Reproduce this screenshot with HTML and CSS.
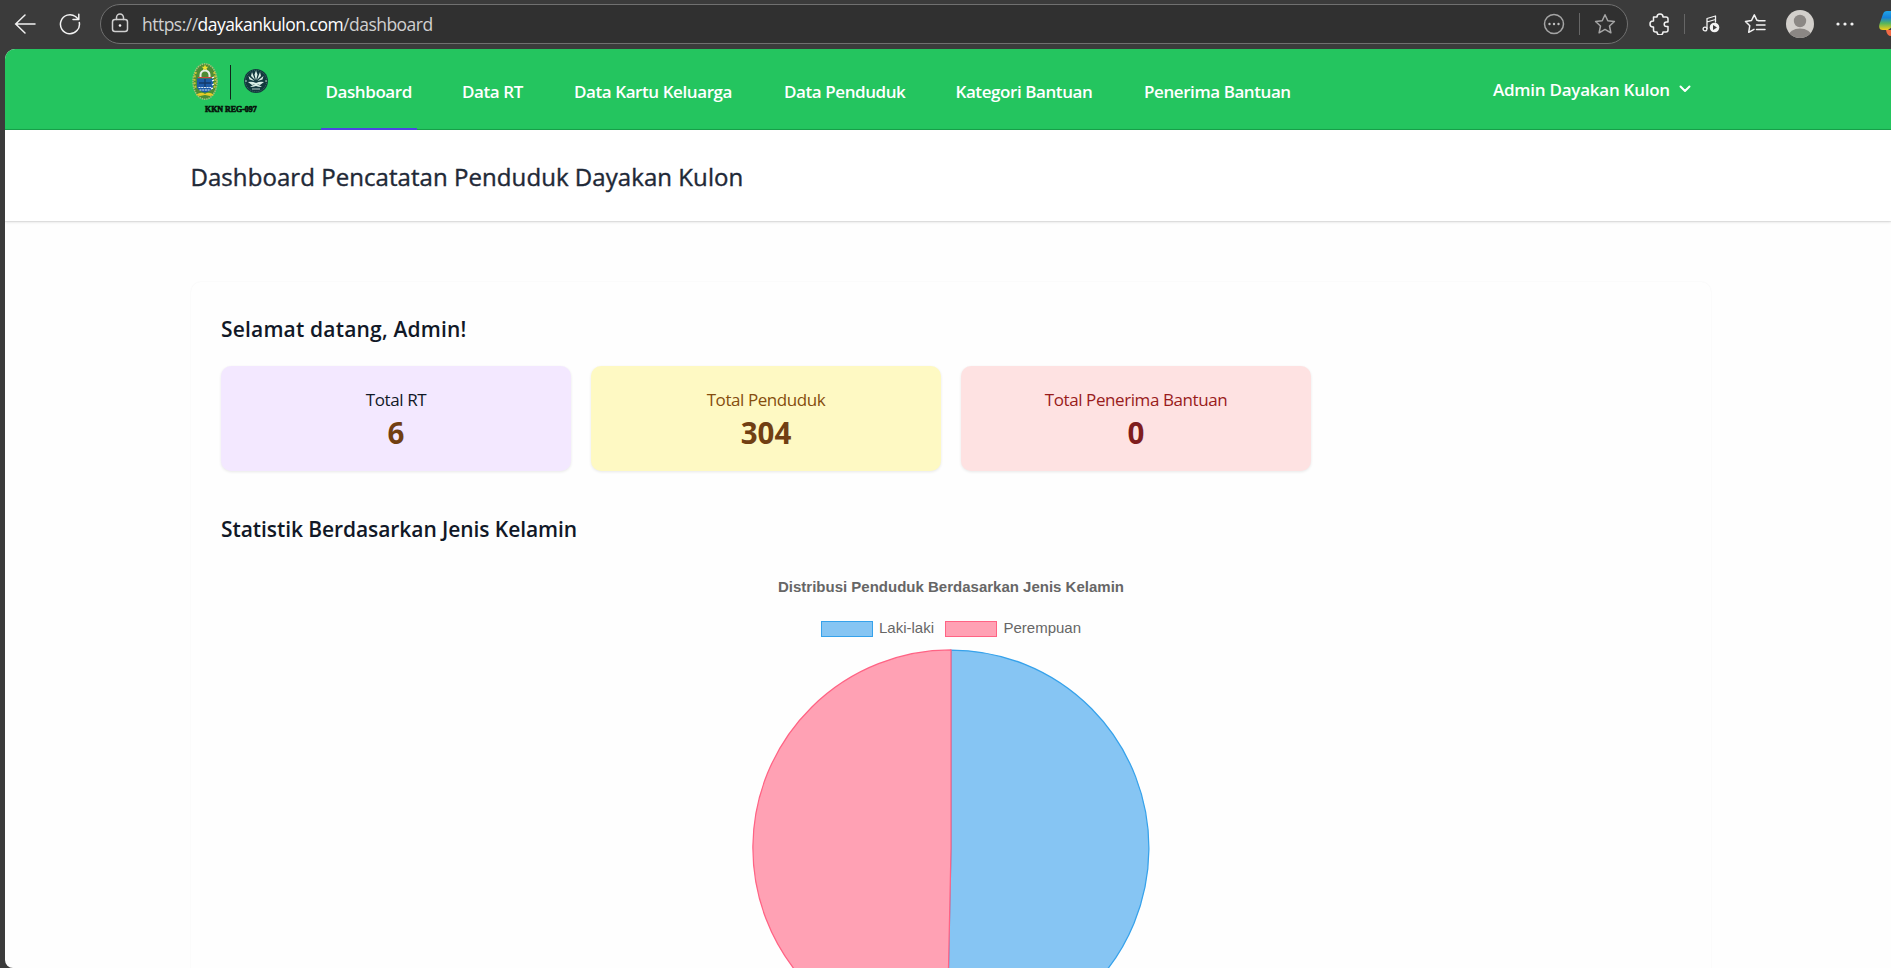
FILE: index.html
```html
<!DOCTYPE html>
<html lang="id">
<head>
<meta charset="utf-8">
<title>Dashboard</title>
<link rel="stylesheet" href="styles.css">
</head>
<body>
<div class="browser-bar">
  <svg class="ico back" viewBox="0 0 22 22"><path d="M21 11H1.5M11 2 1.7 11l9.300 9"/></svg>
  <svg class="ico reload" viewBox="0 0 22 22"><path d="M20.300 9.500A9.500 9.500 0 1 1 16.500 3.500L19.500 6.200M19.800 1.200V6.500H14"/></svg>
  <div class="address">
    <svg class="ico lock" viewBox="0 0 18 20"><rect x="1.500" y="6.500" width="15" height="12" rx="2.500"/><path d="M5.500 6.500V4.500a3.500 3.500 0 0 1 7 0v2"/><circle class="dot" cx="9" cy="12.500" r="1.300"/></svg>
    <span class="url">https://<b>dayakankulon.com</b>/dashboard</span>
    <svg class="ico dim more" viewBox="0 0 22 22"><circle cx="11" cy="11" r="9.500"/><g class="dot"><circle cx="6.500" cy="11" r="1.200"/><circle cx="11" cy="11" r="1.200"/><circle cx="15.500" cy="11" r="1.200"/></g></svg>
    <i class="sep tall"></i>
    <svg class="ico dim star" viewBox="0 0 22 22"><path d="M11 1.800 13.800 7.800 20.400 8.500 15.500 13 16.900 19.800 11 16.400 5.100 19.800 6.500 13 1.600 8.500 8.200 7.800Z"/></svg>
  </div>
  <svg class="ico puzzle" viewBox="0 0 22 22"><path d="M4.500 4H8a3 3 0 0 1 6 0h3q2 0 2 2v3h-1.500a2.300 2.300 0 0 0 0 4.600H19V17q0 2-2 2h-3a3 3 0 0 1-6 0H6.500q-2 0-2-2v-3H4a3 3 0 0 1 0-6h.500Z"/></svg>
  <i class="sep"></i>
  <svg class="ico music" viewBox="0 0 18 20"><path d="M5 14.500V4.500L13.500 2V8M5 8 13.500 5.500"/><circle cx="3" cy="15" r="1.900"/><circle class="fill" cx="12.500" cy="13.500" r="4.800"/><path class="play" d="m11 11 4 2.500-4 2.500z"/></svg>
  <svg class="ico favs" viewBox="0 0 22 22"><path d="M13 7.300 10.300 1.800 7.500 7.500 1.500 8.500 5.800 12.700 4.700 19.300 10 16.300M14 7.700h7M12.500 12h8.500M12.500 16.500h8.500M13 7.300l1.500.300"/></svg>
  <svg class="avatar" viewBox="0 0 28 28"><defs><clipPath id="face"><circle cx="14" cy="14" r="14"/></clipPath></defs><g clip-path="url(#face)"><path fill="#d2cfcb" d="M0 0h28v28H0z"/><circle cx="14" cy="11" r="6.200" fill="#8b8784"/><ellipse cx="14" cy="26.500" rx="11.500" ry="8" fill="#8b8784"/></g></svg>
  <svg class="ico menu" viewBox="0 0 18 6"><g class="dot"><circle cx="2" cy="3" r="1.600"/><circle cx="9" cy="3" r="1.600"/><circle cx="16" cy="3" r="1.600"/></g></svg>
  <svg class="copilot" viewBox="0 0 28 28"><defs><linearGradient id="cp" x2="0" y2="1"><stop offset="0" stop-color="#1fa4e8"/><stop offset=".35" stop-color="#1681d8"/><stop offset=".65" stop-color="#57b55b"/><stop offset="1" stop-color="#f5ce19"/></linearGradient></defs><path fill="url(#cp)" d="M8 1H20V12L9 20H4Q-1 20 .500 14L4 4Q5 1 8 1Z"/><path fill="#f26a45" d="M7 20h13v6H12Q8 26 7 20Z"/></svg>
</div>
<div class="page">
  <nav class="navbar">
    <svg class="logo" viewBox="0 0 70 60">
      <ellipse cx="16" cy="22.500" rx="12" ry="17.700" fill="#4d8c35" stroke="#a8bd78" stroke-width="1.500" stroke-dasharray="1.500 .8"/>
      <path d="m16 5.500 1 2.200 2.400.1-1.800 1.500.6 2.300-2.200-1.300-2.200 1.300.6-2.300-1.800-1.500 2.400-.1z" fill="#efe22e"/>
      <path d="M7 13q-3 8 0 17M25 13q3 8 0 17" fill="none" stroke="#c5c437" stroke-width="2" stroke-dasharray="2 1.500"/>
      <path d="M11.500 18v-2a4.500 4.500 0 0 1 9 0v2" fill="none" stroke="#e7eee5" stroke-width="2"/>
      <path d="M9 18.500h14" stroke="#cf4a3c" stroke-width="1.200"/>
      <path d="M8 19.500h16v8q0 4-8 6-8-2-8-6z" fill="#1d5ca8"/>
      <path d="M16 20v8M10 24h12" stroke="#143a68" stroke-width="1.300"/>
      <path d="M9.500 28.500h13M10.500 31h11" stroke="#d8e8ef" stroke-width="1.200" stroke-dasharray="2 .7"/>
      <path d="M23 19l2-1M23 22l2-1M23 26l2-1M22 30l2-1" stroke="#fff" stroke-width="1.300"/>
      <path d="M7 36q5-4 9-1 4-3 9 1l-4 1-5-1-5 1z" fill="#e6cb27"/>
      <path d="M41.500 6v34.500" stroke="#10251a" stroke-width="1"/>
    </svg>
    <span class="logo-caption">KKN REG-097</span>
    <svg class="seal" viewBox="0 0 26 26"><circle cx="13" cy="13" r="12" fill="#12383d"/><circle cx="13" cy="13" r="10.700" fill="none" stroke="#5d8a85" stroke-width=".6" stroke-dasharray="1 1"/><g fill="#d9eee5"><path d="m13 2.500 1.500 4-1.500 6-1.500-6zM9 4l3 8-4-4zM17 4l-3 8 4-4zM5.500 8l6 5-5-1.500zM20.500 8l-6 5 5-1.500z"/><path d="M5 14q4-1 8 1 4-2 8-1l-4 3q-2-1-4 0-2-1-4 0zM7 19q4-3 6-2 2-1 6 2-4 0-6-1-2 1-6 1z"/></g><path d="M2 13h2M22 13h2M9 21h8" stroke="#d9eee5" stroke-width=".8"/></svg>
    <div class="links">
      <a class="active">Dashboard</a><a>Data RT</a><a>Data Kartu Keluarga</a><a>Data Penduduk</a><a>Kategori Bantuan</a><a>Penerima Bantuan</a>
    </div>
    <div class="user"><span>Admin Dayakan Kulon</span><svg viewBox="0 0 12 8"><path d="m1.500 1.500 4.500 4.500 4.500-4.500"/></svg></div>
  </nav>
  <header class="page-title"><h1>Dashboard Pencatatan Penduduk Dayakan Kulon</h1></header>
  <main class="card">
    <h2 class="welcome">Selamat datang, Admin!</h2>
    <div class="stats">
      <div class="stat purple"><span>Total RT</span><strong>6</strong></div>
      <div class="stat yellow"><span>Total Penduduk</span><strong>304</strong></div>
      <div class="stat red"><span>Total Penerima Bantuan</span><strong>0</strong></div>
    </div>
    <h2 class="section">Statistik Berdasarkan Jenis Kelamin</h2>
    <div class="chart">
      <div class="chart-title">Distribusi Penduduk Berdasarkan Jenis Kelamin</div>
      <div class="legend"><i class="blue"></i><span class="male">Laki-laki</span><i class="pink"></i><span>Perempuan</span></div>
      <svg class="pie" viewBox="0 0 398 398"><path fill="#86c5f3" stroke="#36a2eb" stroke-width="1.250" d="M199 199V1A198 198 0 1 1 194.900 396.960Z"/><path fill="#ffa1b4" stroke="#ff6384" stroke-width="1.250" d="M199 199 194.900 396.960A198 198 0 0 1 199 1Z"/></svg>
    </div>
  </main>
</div>
</body>
</html>
```
FILE: styles.css
```css
* { box-sizing: border-box; }
body { margin: 0; width: 1891px; height: 968px; overflow: hidden; background: #3b3b3b; font-family: "Open Sans", "Noto Sans", sans-serif; }
svg { display: block; flex: none; }
.browser-bar { height: 49px; display: flex; align-items: center; padding: 0 0 1px 14px; overflow: hidden; }
.ico { fill: none; stroke: #f2f2f2; stroke-width: 1.5; stroke-linecap: round; stroke-linejoin: round; }
.ico .dot, .ico .fill { fill: #f2f2f2; stroke: none; }
.ico .play { fill: #3b3b3b; stroke: none; }
.ico.dim { stroke: #a5a5a5; }
.ico.dim .dot { fill: #c0c0c0; }
.back { width: 22px; height: 22px; }
.reload { width: 22px; height: 22px; margin-left: 23px; }
.address { width: 1528px; height: 40px; margin-left: 19px; border: 1px solid #707070; border-radius: 20px; background: #303030; display: flex; align-items: center; flex: none; }
.lock { width: 18px; height: 20px; margin-left: 10px; margin-top: -2px; stroke: #cfcfcf; }
.url { width: 1399px; margin-left: 13px; font-size: 17.500px; letter-spacing: -0.52px; color: #d0d0d0; line-height: 38px; white-space: nowrap; }
.url b { font-weight: 400; color: #fff; }
.more { width: 22px; height: 22px; margin-left: 2px; }
.sep { width: 1px; height: 20px; background: #666; flex: none; }
.sep.tall { height: 22px; margin-left: 14px; }
.star { width: 22px; height: 22px; margin-left: 14px; }
.puzzle { width: 22px; height: 22px; margin-left: 21px; }
.puzzle + .sep { margin-left: 13px; }
.music { width: 18px; height: 20px; margin-left: 17px; stroke-width: 1.3; }
.favs { width: 22px; height: 22px; margin-left: 24px; }
.avatar { width: 28px; height: 28px; margin-left: 20px; }
.menu { width: 18px; height: 6px; margin-left: 22px; }
.copilot { width: 28px; height: 28px; margin-left: 25px; }

.page { margin-left: 5px; width: 1886px; height: 919px; background: #fefefe; border-radius: 10px 0 0 8px; overflow: hidden; }
.navbar { position: relative; height: 81px; background: #24c55f; border-bottom: 1px solid #18a34b; display: flex; }
.logo { width: 70px; height: 60px; margin: 10px 0 0 184px; }
.seal { position: absolute; left: 238px; top: 19px; width: 26px; height: 26px; }
.logo-caption { position: absolute; left: 200px; top: 55px; font: 700 8px/12px "Liberation Serif", serif; letter-spacing: -0.05px; color: #06140b; white-space: nowrap; -webkit-text-stroke: 0.6px #06140b; }
.links { margin-left: 62px; display: grid; grid-template-columns: 136.500px 112px 210px 171.500px 188.500px 160px; }
.links a { justify-self: start; padding: 0 4.500px; height: 81px; line-height: 86px; font-size: 17px; font-weight: 600; letter-spacing: -0.42px; color: #fff; white-space: nowrap; }
.links a.active { width: 96px; border-bottom: 2px solid #4f46e5; }
.user { margin-left: 193.500px; display: flex; align-items: center; height: 80px; font-size: 17px; font-weight: 600; letter-spacing: -0.25px; color: #fff; white-space: nowrap; }
.user span { width: 186px; }
.user svg { width: 12px; height: 8px; fill: none; stroke: #fff; stroke-width: 2; stroke-linecap: round; stroke-linejoin: round; }
.page-title { height: 91px; padding: 28.500px 0 0 185.500px; background: #fff; box-shadow: 0 1px 3px rgba(0,0,0,.12), 0 1px 1px rgba(0,0,0,.06); position: relative; }
h1, h2 { margin: 0; white-space: nowrap; }
h1 { font-size: 24px; line-height: 36px; font-weight: 500; letter-spacing: 0.06px; color: #1f2937; -webkit-text-stroke: 0.4px #1f2937; }
.card { margin: 61px 0 0 186px; width: 1520px; height: 740px; padding: 32px 30px; border-radius: 10px; box-shadow: 0 0 2px rgba(0,0,0,.05); }
h2 { font-size: 21px; line-height: 30px; font-weight: 600; letter-spacing: -0.08px; color: #111827; }
.welcome { letter-spacing: 0.18px; }
.stats { display: grid; grid-template-columns: 350px 350px 350px; gap: 20px; margin-top: 22px; }
.stat { height: 105px; border-radius: 10px; padding-top: 20.500px; display: flex; flex-direction: column; align-items: center; box-shadow: 0 1px 3px rgba(0,0,0,.09); }
.stat span { font-size: 17px; line-height: 25px; letter-spacing: -0.42px; }
.stat strong { font-size: 29.500px; line-height: 41px; font-weight: 700; }
.purple { background: #f3e8ff; color: #111827; }
.yellow { background: #fef9c3; color: #854d0e; }
.red { background: #fee2e2; color: #991b1b; }
.purple strong, .yellow strong { color: #713f12; }
.red strong { color: #7f1d1d; }
.section { margin-top: 43px; }
.chart { display: flex; flex-direction: column; align-items: center; font-family: "Liberation Sans", Arial, sans-serif; color: #666; font-size: 15px; }
.chart-title { margin-top: 34px; font-weight: 700; line-height: 18px; }
.legend { display: flex; align-items: center; margin-top: 24px; height: 18px; }
.legend i { width: 52px; height: 16px; border: 1px solid; margin-right: 6px; }
.legend span { line-height: 16px; padding-bottom: 2px; }
.legend .male { margin-right: 11.500px; }
.legend .blue { background: #86c5f3; border-color: #36a2eb; }
.legend .pink { background: #ffa1b4; border-color: #ff6384; }
.pie { width: 398px; height: 398px; margin-top: 10.500px; }
```
